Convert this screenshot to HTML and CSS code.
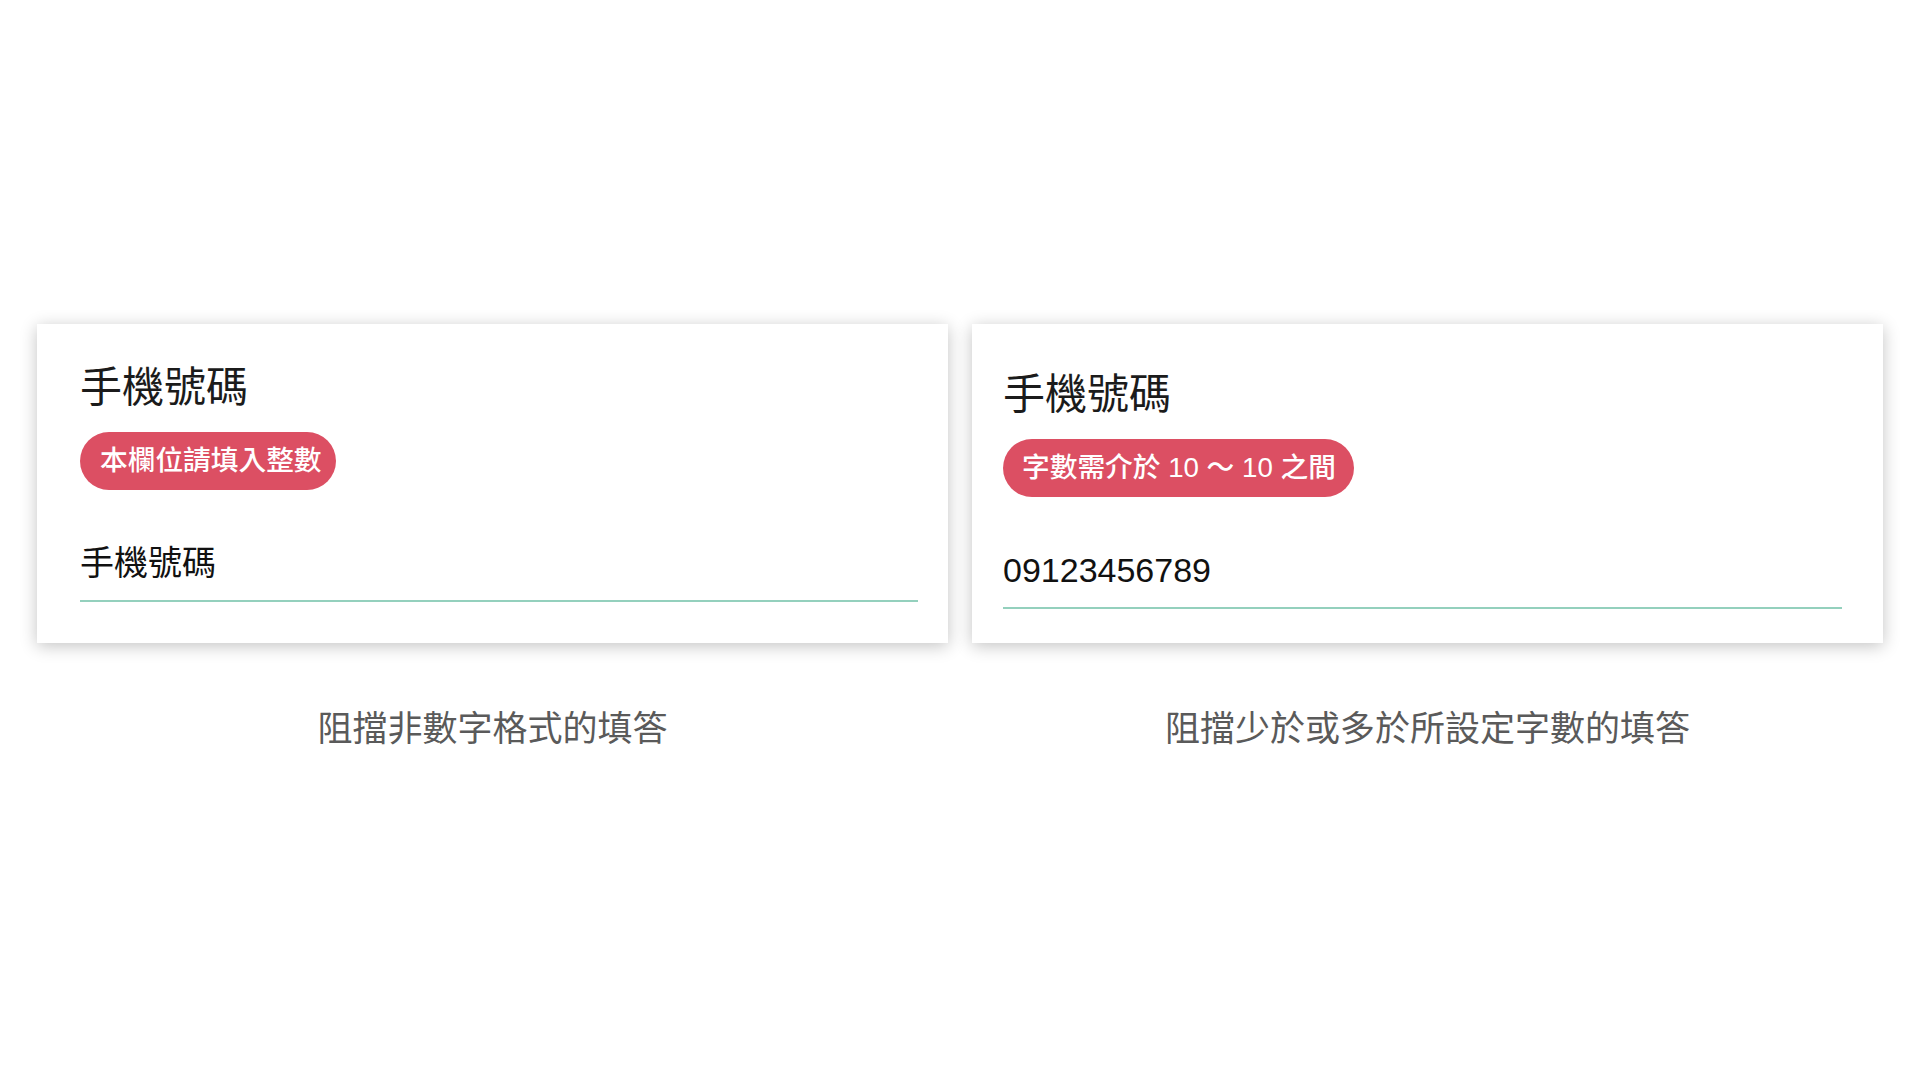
FILE: index.html
```html
<!DOCTYPE html>
<html lang="zh-Hant">
<head>
<meta charset="utf-8">
<title>手機號碼驗證</title>
<link rel="stylesheet" href="styles.css">
</head>
<body>
<main class="page">
  <section class="column">
    <div class="card card-format">
      <h2 class="card-title">手機號碼</h2>
      <span class="badge badge-short">本欄位請填入整數</span>
      <div class="field">手機號碼</div>
    </div>
    <p class="caption">阻擋非數字格式的填答</p>
  </section>
  <section class="column">
    <div class="card card-length">
      <h2 class="card-title">手機號碼</h2>
      <span class="badge">字數需介於 10 ～ 10 之間</span>
      <div class="field">09123456789</div>
    </div>
    <p class="caption">阻擋少於或多於所設定字數的填答</p>
  </section>
</main>
</body>
</html>
```

FILE: styles.css
```css
html, body {
  margin: 0;
  padding: 0;
  background: #ffffff;
}

body {
  font-family: "Liberation Sans", "Noto Sans CJK TC", sans-serif;
  color: #1b1b1b;
}

.page {
  display: grid;
  grid-template-columns: 911px 911px;
  column-gap: 24px;
  padding: 324px 37px 0;
}

.column {
  display: flex;
  flex-direction: column;
}

.card {
  box-sizing: border-box;
  height: 319px;
  background: #ffffff;
  box-shadow: 0 3px 16px rgba(0, 0, 0, 0.24);
  display: flex;
  flex-direction: column;
  align-items: flex-start;
}

.card-format {
  padding: 43px 30px 0 43px;
}

.card-length {
  padding: 50px 41px 0 31px;
}

.card-title {
  margin: 0;
  font-size: 42px;
  line-height: 1;
  font-weight: 400;
  color: #1b1b1b;
}

.badge {
  margin-top: 23px;
  height: 58px;
  box-sizing: border-box;
  display: inline-flex;
  align-items: center;
  padding: 0 18px 0 19px;
  border-radius: 29px;
  background: #dc4f63;
  color: #ffffff;
  font-size: 27.7px;
  line-height: 1;
  font-weight: 500;
  white-space: nowrap;
}

.badge-short {
  padding: 0 14px 0 20px;
}

.field {
  align-self: stretch;
  margin-top: 56px;
  padding-bottom: 20px;
  border-bottom: 2px solid #94d0bd;
  font-size: 34px;
  line-height: 1;
  color: #111111;
}

.caption {
  margin: 68px 0 0;
  text-align: center;
  font-size: 35px;
  line-height: 1;
  color: #5a5a5a;
}
```
